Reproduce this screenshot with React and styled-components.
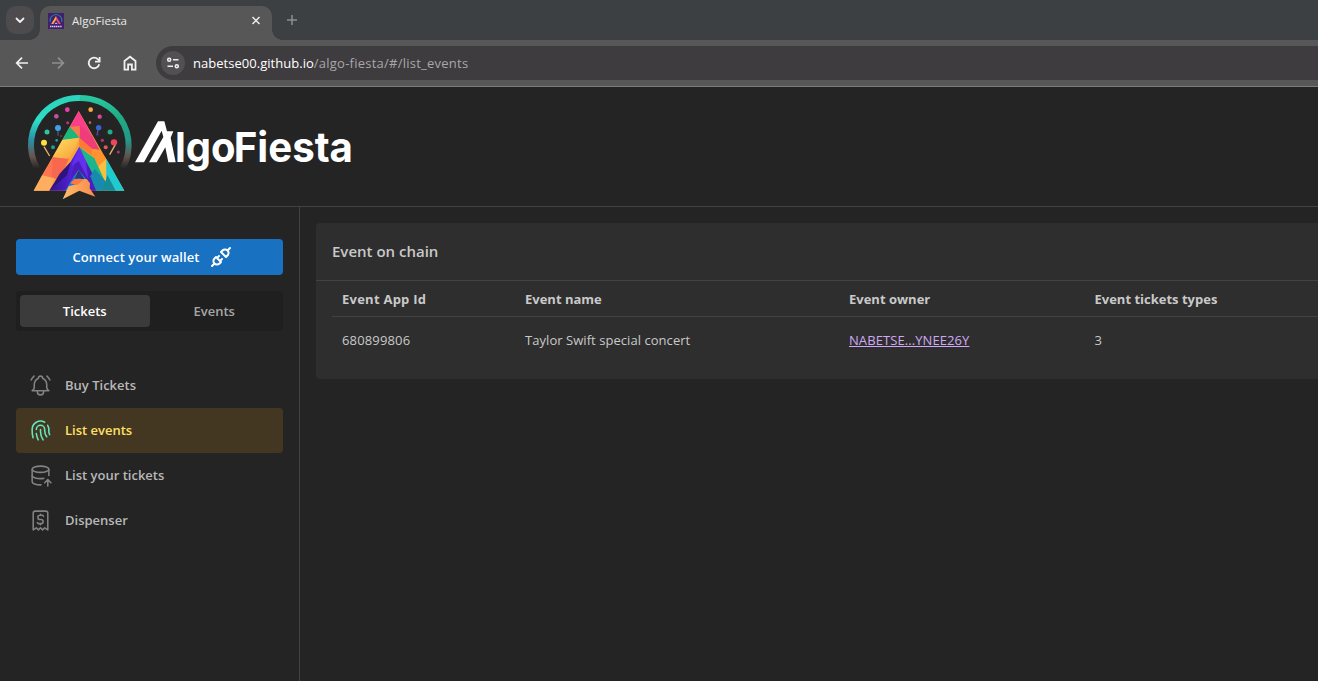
import React from "react";
import styled, { createGlobalStyle, css } from "styled-components";
import { TbBellRinging, TbFingerprint } from "react-icons/tb";

const GlobalStyle = createGlobalStyle`
  * { box-sizing: border-box; }
  html, body { margin: 0; background: #242424; }
  body {
    font-family: "Open Sans", "Noto Sans", sans-serif;
    font-size: 13px;
    color: #c9c9c9;
    overflow: hidden;
  }
`;

const Screen = styled.div`
  display: flex;
  flex-direction: column;
  width: 100vw;
  height: 100vh;
  overflow: hidden;
`;

/* Browser chrome */
const TabStrip = styled.div`
  display: flex;
  flex: none;
  height: 40px;
  padding: 6px 0 0 6px;
  background: #3c4043;
`;

const TabSearch = styled.button`
  display: grid;
  place-items: center;
  width: 28px;
  height: 28px;
  margin: 0 6px 0 0;
  padding: 0;
  border: 0;
  border-radius: 10px;
  background: #4e4b4e;
`;

const Tab = styled.div`
  position: relative;
  display: flex;
  align-items: center;
  width: 232px;
  height: 34px;
  padding: 0 10px 5px 8px;
  border-radius: 10px 10px 0 0;
  background: #575757;
  color: #e8e8e8;
  &::before,
  &::after {
    content: "";
    position: absolute;
    bottom: 0;
    width: 10px;
    height: 10px;
  }
  &::before {
    left: -10px;
    background: radial-gradient(circle at 0 0, transparent 9.5px, #575757 10px);
  }
  &::after {
    right: -10px;
    background: radial-gradient(circle at 100% 0, transparent 9.5px, #575757 10px);
  }
`;

const TabTitle = styled.span`
  flex: 1;
  margin-left: 8px;
  font-size: 11.6px;
  line-height: 16px;
`;

const NewTab = styled.div`
  display: grid;
  place-items: center;
  width: 40px;
  height: 28px;
`;

const Toolbar = styled.div`
  display: flex;
  flex: none;
  align-items: center;
  height: 47px;
  padding: 0 0 1px 12px;
  border-bottom: 1px solid #7c7c7c;
  background: #575757;
`;

const ToolButton = styled.div`
  display: grid;
  place-items: center;
  width: 20px;
  height: 20px;
  margin-right: 16px;
  color: ${(p) => (p.$dim ? "#8f8f8f" : "#f1f1f1")};
`;

const AddressBar = styled.div`
  display: flex;
  flex: 1;
  align-items: center;
  height: 34px;
  padding-left: 5px;
  border-radius: 17px 0 0 17px;
  background: #3f3c3f;
`;

const SiteInfo = styled.div`
  display: grid;
  place-items: center;
  width: 24px;
  height: 24px;
  margin-right: 8px;
  border-radius: 50%;
  background: #535053;
`;

const Url = styled.span`
  color: #fff;
  line-height: 20px;
  letter-spacing: 0.03px;
`;

const UrlPath = styled.span`
  color: #a9a7a9;
  letter-spacing: 0.24px;
`;

/* Page */
const Header = styled.header`
  flex: none;
  height: 120px;
  padding: 1px 0 0 20px;
  border-bottom: 1px solid #424242;
`;

const Main = styled.div`
  display: flex;
  flex: 1;
  min-height: 0;
`;

const Sidebar = styled.aside`
  display: flex;
  flex: none;
  flex-direction: column;
  width: 300px;
  padding: 32px 16px 0;
  border-right: 1px solid #424242;
`;

const WalletButton = styled.button`
  display: flex;
  align-items: center;
  justify-content: center;
  gap: 9px;
  height: 36px;
  padding: 0 0 0 6px;
  border: 0;
  border-radius: 4px;
  background: #1971c2;
  color: #fff;
  font: 600 13px/20px "Open Sans", "Noto Sans", sans-serif;
  letter-spacing: 0.1px;
`;

const Segmented = styled.div`
  display: flex;
  height: 40px;
  margin: 16px 0 32px;
  padding: 4px;
  border-radius: 4px;
  background: #1f1f1f;
`;

const Segment = styled.div`
  flex: 1;
  border-radius: 4px;
  font-weight: 600;
  line-height: 32px;
  text-align: center;
  color: #a6a6a6;
  ${(p) =>
    p.$active &&
    css`
      background: #3b3b3b;
      color: #fff;
    `}
`;

const NavItem = styled.a`
  display: flex;
  align-items: center;
  gap: 12px;
  height: 45px;
  padding: 0 12px 1px;
  border-radius: 4px;
  font-weight: 600;
  line-height: 20px;
  color: ${(p) => (p.$active ? "#ffe066" : "#b8b8b8")};
  background: ${(p) => (p.$active ? "#443721" : "transparent")};
  svg {
    flex: none;
    width: 25px;
    height: 25px;
    margin-top: 1px;
    stroke-width: 1.5;
    color: ${(p) => (p.$active ? "#63e6be" : "#828282")};
  }
`;

const Content = styled.main`
  flex: 1;
  min-width: 0;
  padding: 16px 0 0 16px;
`;

const Card = styled.section`
  height: 156px;
  border-radius: 4px 0 0 4px;
  background: #2e2e2e;
`;

const CardTitle = styled.h2`
  height: 58px;
  margin: 0;
  padding: 0 16px;
  border-bottom: 1px solid #424242;
  font-size: 15px;
  font-weight: 600;
  line-height: 57px;
`;

const Row = styled.div`
  display: grid;
  grid-template-columns: 183px 324px 245.5px 1fr;
  align-items: center;
  height: ${(p) => (p.$head ? 36 : 46)}px;
  margin-left: 16px;
  font-weight: ${(p) => (p.$head ? 700 : 400)};
  border-bottom: ${(p) => (p.$head ? "1px solid #424242" : "0")};
`;

const Cell = styled.div`
  padding: 0 10px;
  line-height: 20px;
  letter-spacing: ${(p) => p.$spacing || 0}px;
`;

const OwnerLink = styled.a`
  color: #d0a9f5;
  text-decoration: underline;
  text-decoration-thickness: 1px;
  text-underline-offset: 1px;
`;

const stroke = { fill: "none", stroke: "currentColor", strokeLinecap: "round", strokeLinejoin: "round" };

const DatabaseUpIcon = () => (
  <svg viewBox="0 0 24 24" {...stroke}>
    <path d="M4 6c0 1.657 3.582 3 8 3s8-1.343 8-3-3.582-3-8-3-8 1.343-8 3" />
    <path d="M4 6v6c0 1.657 3.582 3 8 3 1.118 0 2.183-.086 3.15-.241M20 12V6" />
    <path d="M4 12v6c0 1.657 3.582 3 8 3 .157 0 .312-.002.466-.005" />
    <path d="M19 22v-6M22 19l-3-3-3 3" />
  </svg>
);

const ReceiptIcon = () => (
  <svg viewBox="0 0 24 24" {...stroke}>
    <path d="M5 21V5a2 2 0 0 1 2-2h10a2 2 0 0 1 2 2v16l-3-2-2 2-2-2-2 2-2-2-3 2" />
    <path d="M14.8 8A2 2 0 0 0 14 7h-2.5a2 2 0 0 0 0 4h1a2 2 0 0 1 0 4H10a2 2 0 0 1-1-1M12 6v1m0 8v1" />
  </svg>
);

const PlugIcon = () => (
  <svg width="24" height="24" viewBox="0 0 24 24" strokeWidth="2" {...stroke}>
    <path d="M7 12l5 5-1.5 1.5a3.536 3.536 0 1 1-5-5zM17 12l-5-5 1.5-1.5a3.536 3.536 0 1 1 5 5zM3 21l2.5-2.5M18.5 5.5L21 3M10 11l-2 2M13 14l-2 2" />
  </svg>
);

const Favicon = () => (
  <svg width="16" height="16" viewBox="0 0 16 16">
    <rect width="16" height="16" fill="#40206e" />
    <path d="M2.2 9A6 6 0 1 1 13.8 9" fill="none" stroke="#267f9c" strokeWidth="1.1" />
    <path d="M8 3L3.2 11h2.4L8 7.5z" fill="#f9ac43" />
    <path d="M8 3l4.8 8h-2.4L8 7z" fill="#f24b72" />
    <path d="M8 6.7L5.5 11h5z" fill="#3b22ac" />
    <path d="M6.7 11L8 9.4 9.5 11z" fill="#ffcb70" />
    <path d="M2 13.4h12" stroke="#d7c8e6" strokeWidth="1.5" strokeDasharray="1.4 .5" />
  </svg>
);

const dots = [
  [142, 65, 7, "#ec3fae"], [212, 65, 7, "#ffa63d"], [109, 85, 7, "#c64fa0"], [239, 86, 6.5, "#d84a9a"],
  [143, 104, 4.5, "#c02f88"], [210, 104, 4, "#b96d42"], [114, 120, 9, "#3f9fe8"], [236, 119, 8, "#3b63d8"],
  [81, 132, 7.5, "#2dc5a2"], [270, 132, 7.5, "#1fac88"], [72, 164, 9, "#ffdf3b"], [282, 163, 9.5, "#f0445e"],
  [110, 157, 4, "#209fae"], [99, 178, 6, "#1d9f8e"], [247, 157, 5, "#b33963"], [257, 178, 6, "#e05a5b"],
  [295, 192, 4.5, "#a73976"], [232, 139, 4, "#50328e"], [123, 144, 3, "#694a30"],
];

const Logo = () => (
  <svg width="340" height="118" viewBox="0 0 1020 354" role="img" aria-label="AlgoFiesta">
    <defs>
      <linearGradient id="ringLeft" x1="0" y1="0" x2="0" y2="1">
        <stop offset="0" stopColor="#2bd5bb" />
        <stop offset=".32" stopColor="#2edcc8" />
        <stop offset=".6" stopColor="#2a8fa3" />
        <stop offset=".83" stopColor="#66544f" />
        <stop offset="1" stopColor="#66544f" stopOpacity="0" />
      </linearGradient>
      <linearGradient id="ringRight" x1="0" y1="0" x2="0" y2="1">
        <stop offset="0" stopColor="#28c7a0" />
        <stop offset=".3" stopColor="#20a982" />
        <stop offset=".6" stopColor="#239987" />
        <stop offset=".83" stopColor="#61504b" />
        <stop offset="1" stopColor="#61504b" stopOpacity="0" />
      </linearGradient>
      <linearGradient id="gold" x1="0" y1="0" x2="1" y2="1">
        <stop offset="0" stopColor="#ffe45b" />
        <stop offset="1" stopColor="#f79a3e" />
      </linearGradient>
      <linearGradient id="violet" x1="0" y1="0" x2="1" y2="0">
        <stop offset="0" stopColor="#35138f" />
        <stop offset="1" stopColor="#5b26ed" />
      </linearGradient>
      <linearGradient id="foot" x1="0" y1="0" x2="1" y2="0">
        <stop offset="0" stopColor="#ffbc66" />
        <stop offset="1" stopColor="#f98a4e" />
      </linearGradient>
    </defs>
    <path d="M52 242C20 185 29 120 72 74 103 43 142 29 180 30" fill="none" stroke="url(#ringLeft)" strokeWidth="18" />
    <path d="M180 30C219 30 255 43 286 73 330 119 338 185 308 242" fill="none" stroke="url(#ringRight)" strokeWidth="18" />
    <path d="M114 126v17M232 138l3-20" stroke="#51718d" strokeWidth="3" />
    <path d="M72 176l17 28M286 170l-17 30" stroke="#e9b270" strokeWidth="4" />
    {dots.map(([x, y, r, c]) => (
      <circle key={`${x}-${y}`} cx={x} cy={y} r={r} fill={c} />
    ))}
    <path d="M176 69L41 308h272z" fill="#f5a33b" />
    <path d="M176 69l-26 47 35 4 32 24z" fill="#fa3e8c" />
    <path d="M150 116l30-2-4 34-26-20z" fill="#f87c4b" />
    <path d="M180 112l37 32 22 42-24-4-37-32z" fill="#ee3d78" />
    <path d="M149 116l20 22 9 12-51 6z" fill="#18b77c" />
    <path d="M127 156l51-7-11 30-21 34-48-5z" fill="url(#gold)" />
    <path d="M98 208l48 5-28 62-52-13z" fill="#ff7552" />
    <path d="M98 208l-3 60 23 7 28-62z" fill="#f7684e" />
    <path d="M66 262l37 9-15 37H41z" fill="#ffad60" />
    <path d="M178 150l37 32 8 24-45-30z" fill="#ff7b34" />
    <path d="M215 182l25 5 19 26-20 19-24-20z" fill="#ff932f" />
    <path d="M259 213v76l-37-35 17-22z" fill="#f7c13f" />
    <path d="M178 176l-26 45-64 87h49l38-61 5-35z" fill="url(#violet)" />
    <path d="M152 221l-11 40-53 47 31-51z" fill="#2d137c" />
    <path d="M178 176l20 27 28 66 4 39h-24l-30-63-24 27z" fill="#4a1dbd" />
    <path d="M178 178l-24 57 22-16 29 55-8-61z" fill="#6530ed" />
    <path d="M178 177l45 34 36 78-14 19-43-81z" fill="#1cb68d" />
    <path d="M224 242l39 45-14 21h-21l-17-43z" fill="#188aab" />
    <path d="M259 212l54 96h-47l-7-21z" fill="#20cbd0" />
    <path d="M262 260l25 48h-38z" fill="#168c99" />
    <path d="M176 246l-27 40-13 22 26-8 16-28 28 36-8-36z" fill="#167dcc" />
    <path d="M176 246l-12 27 14-2 17 5z" fill="#263989" />
    <path d="M163 274l37-1 10 13-1 15 17 25-48-18-50 26 18-39 28-8z" fill="url(#foot)" />
    <path d="M163 274l30-1-20 18-23-5z" fill="#ff7843" />
    <g fill="#fff">
      <path d="M345 223L414 100h19l8 30h19l-8 19 15 74h-22l-9-45-26 45h-23l43-76-5-19-53 95z" />
      <g fontFamily="Inter, sans-serif" fontWeight="700" fontSize="124">
        <text x="465" y="223" textLength="182" lengthAdjust="spacingAndGlyphs">lgo</text>
        <text x="641" y="223" textLength="358" lengthAdjust="spacingAndGlyphs">Fiesta</text>
      </g>
    </g>
  </svg>
);

const events = [
  { id: "680899806", name: "Taylor Swift special concert", owner: "NABETSE...YNEE26Y", types: 3 },
];

export default function App() {
  return (
    <Screen>
      <GlobalStyle />
      <TabStrip>
        <TabSearch>
          <svg width="12" height="12" viewBox="0 0 12 12" {...stroke} stroke="#eee" strokeWidth="1.8">
            <path d="M2.5 4.5L6 8l3.5-3.5" />
          </svg>
        </TabSearch>
        <Tab>
          <Favicon />
          <TabTitle>AlgoFiesta</TabTitle>
          <svg width="12" height="12" viewBox="0 0 12 12" stroke="#eee" strokeWidth="1.5">
            <path d="M2.5 2l7 7M9.5 2l-7 7" />
          </svg>
        </Tab>
        <NewTab>
          <svg width="12" height="12" viewBox="0 0 12 12" stroke="#8c8d90" strokeWidth="1.5">
            <path d="M6 1v10M1 6h10" />
          </svg>
        </NewTab>
      </TabStrip>
      <Toolbar>
        <ToolButton>
          <svg width="14" height="14" viewBox="0 0 14 14" fill="none" stroke="currentColor" strokeWidth="1.7">
            <path d="M13 7H2M7 1.7L1.7 7 7 12.3" />
          </svg>
        </ToolButton>
        <ToolButton $dim>
          <svg width="14" height="14" viewBox="0 0 14 14" fill="none" stroke="currentColor" strokeWidth="1.7">
            <path d="M1 7h11M7 1.7L12.3 7 7 12.3" />
          </svg>
        </ToolButton>
        <ToolButton>
          <svg width="14" height="14" viewBox="0 0 14 14" fill="none" stroke="currentColor" strokeWidth="1.8">
            <path d="M12.2 8.2A5.3 5.3 0 1 1 11 3.4l1.5 1.6" />
            <path d="M12.6 1v4.6H8" />
          </svg>
        </ToolButton>
        <ToolButton>
          <svg width="14" height="16" viewBox="0 0 14 16" fill="none" stroke="currentColor" strokeWidth="1.8">
            <path d="M1.5 6L7 1.7 12.5 6v8.6H8.9V9.5H5.1v5.1H1.5z" />
          </svg>
        </ToolButton>
        <AddressBar>
          <SiteInfo>
            <svg width="14" height="12" viewBox="0 0 14 12" fill="none" stroke="#eee" strokeWidth="1.6">
              <circle cx="3.2" cy="2.8" r="1.5" />
              <path d="M7 2.8h5.5M1.5 9.2H7" />
              <circle cx="10.8" cy="9.2" r="1.5" />
            </svg>
          </SiteInfo>
          <Url>
            nabetse00.github.io<UrlPath>/algo-fiesta/#/list_events</UrlPath>
          </Url>
        </AddressBar>
      </Toolbar>

      <Header>
        <Logo />
      </Header>
      <Main>
        <Sidebar>
          <WalletButton>
            Connect your wallet
            <PlugIcon />
          </WalletButton>
          <Segmented>
            <Segment $active>Tickets</Segment>
            <Segment>Events</Segment>
          </Segmented>
          <NavItem>
            <TbBellRinging />
            Buy Tickets
          </NavItem>
          <NavItem $active>
            <TbFingerprint />
            List events
          </NavItem>
          <NavItem>
            <DatabaseUpIcon />
            List your tickets
          </NavItem>
          <NavItem>
            <ReceiptIcon />
            Dispenser
          </NavItem>
        </Sidebar>
        <Content>
          <Card>
            <CardTitle>Event on chain</CardTitle>
            <Row $head>
              <Cell $spacing={0.25}>Event App Id</Cell>
              <Cell>Event name</Cell>
              <Cell>Event owner</Cell>
              <Cell>Event tickets types</Cell>
            </Row>
            {events.map((e) => (
              <Row key={e.id}>
                <Cell $spacing={0.15}>{e.id}</Cell>
                <Cell $spacing={0.05}>{e.name}</Cell>
                <Cell $spacing={0.08}>
                  <OwnerLink>{e.owner}</OwnerLink>
                </Cell>
                <Cell>{e.types}</Cell>
              </Row>
            ))}
          </Card>
        </Content>
      </Main>
    </Screen>
  );
}
